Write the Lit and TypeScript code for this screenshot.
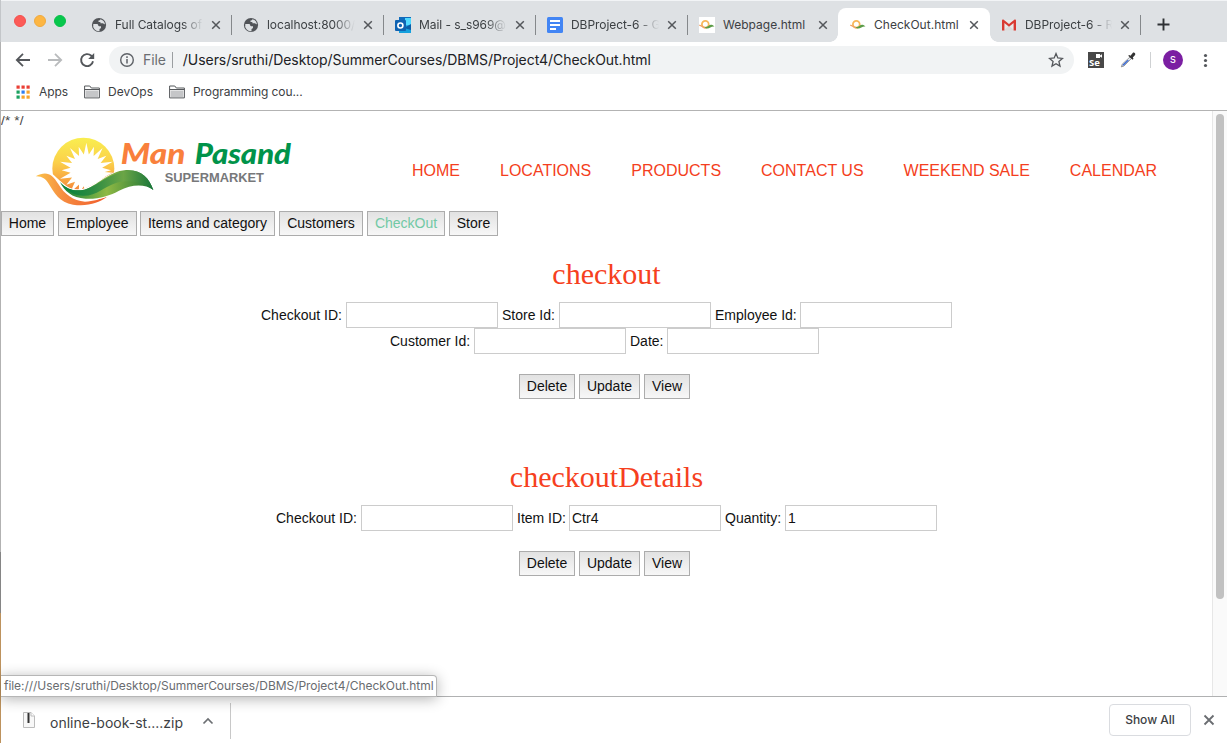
import { LitElement, html, css, svg } from "lit";
import { customElement, property } from "lit/decorators.js";
import { classMap } from "lit/directives/class-map.js";
import { styleMap } from "lit/directives/style-map.js";

const leafIcon = svg`
  <circle cx="6.300" cy="7.300" r="3.400" fill="none" stroke="#f8b75a" stroke-width="1.800"/>
  <path d="M.2 8.400C2.600 7.800 3 11 7.600 11.100" fill="none" stroke="#f0a368" stroke-width="1.200"/>
  <path d="M5.200 9.700C8.600 10.900 9.800 7.200 12.600 7.700c1.200.2 2.200.9 2.900 1.900C12.800 8.900 10.500 11.600 7.900 11.400 6.800 11.300 5.700 10.500 5.200 9.700Z" fill="#5b9c46"/>`;

const globeIcon = svg`
  <circle cx="8" cy="8" r="7.100" fill="#515458"/>
  <path d="M2.300 6.900h3.500c.9 0 1.400.6 1.400 1.300 0 .8.800 1 1.600 1h1.200v1.300c0 .9-.9 1-1.500 1.400v2.400A5.900 5.900 0 0 1 2.300 6.900Z" fill="#dee1e4"/>
  <path d="M9.300 2.200c-.1 1-1 1.300-1.800 1.300v1.400h1.900v1.400h2.300c.9 0 1.200.9 1.900.9h.4A6 6 0 0 0 9.300 2.200Z" fill="#dee1e4"/>`;

const icons: Record<string, unknown> = {
  globe: globeIcon,
  outlook: svg`
    <rect x="4" y="0" width="12" height="16" fill="#28a8ea"/>
    <path d="M4 0h12v4H4z" fill="#0f6cbd"/><path d="M10 1h6v7h-6z" fill="#50d9ff"/>
    <path d="M4 9h12v7H4z" fill="#14a0dd"/><path d="m9 11 7-4v6z" fill="#0a5ea8"/>
    <rect x="0" y="3" width="11" height="11" rx="1" fill="#0f63b2"/>
    <circle cx="5.400" cy="8.500" r="2.500" fill="none" stroke="#fff" stroke-width="1.600"/>`,
  docs: svg`
    <rect width="16" height="16" rx="1.500" fill="#4285f4"/>
    <path d="M3 4h10M3 8h10M3 12h6" stroke="#fff" stroke-width="1.800"/>`,
  leafBox: svg`<rect width="16" height="16" fill="#fff"/>${leafIcon}`,
  leaf: leafIcon,
  gmail: svg`
    <path d="M2.500 3h11v10.500h-11z" fill="#e8e8e8"/>
    <path d="M2.500 13.500 8 9l5.500 4.500z" fill="#dadada"/>
    <path d="M1 3.600C1 2.600 2 2.200 2.700 2.800L8 7l5.300-4.200c.7-.6 1.700-.2 1.700.8v9.900h-2.400V6L8 9.700 3.400 6v7.500H1z" fill="#d93a32"/>`,
};

interface TabInfo { title: string; icon: string; width: number; fade?: boolean; active?: boolean; }

const tabs: TabInfo[] = [
  { title: "Full Catalogs of", icon: "globe", width: 152, fade: true },
  { title: "localhost:8000/", icon: "globe", width: 152, fade: true },
  { title: "Mail - s_s969@", icon: "outlook", width: 152, fade: true },
  { title: "DBProject-6 - G", icon: "docs", width: 152, fade: true },
  { title: "Webpage.html", icon: "leafBox", width: 151 },
  { title: "CheckOut.html", icon: "leaf", width: 151, active: true },
  { title: "DBProject-6 - R", icon: "gmail", width: 151, fade: true },
];

@customElement("browser-tab")
class BrowserTab extends LitElement {
  @property({ attribute: false }) tab!: TabInfo;
  @property({ type: Boolean }) separated = false;
  static styles = css`
    :host { display: block; }
    .tab { display: flex; align-items: center; box-sizing: border-box; height: 34px; padding: 0 9px 0 12px; position: relative; }
    .sep::before { content: ""; position: absolute; left: 0; top: 7px; width: 1px; height: 20px; background: #85888b; }
    .active { background: #fff; border-radius: 8px 8px 0 0; margin-right: -1px; padding-right: 10px; }
    .active::before, .active::after { content: ""; position: absolute; bottom: 0; width: 8px; height: 8px; }
    .active::before { left: -8px; background: radial-gradient(circle at 0 0, transparent 7.500px, #fff 8px); }
    .active::after { right: -8px; background: radial-gradient(circle at 100% 0, transparent 7.500px, #fff 8px); }
    .icon { flex: none; width: 16px; height: 16px; }
    .title { flex: 1; min-width: 0; margin-left: 8px; white-space: nowrap; font: 12px/18px Inter, sans-serif; letter-spacing: .02px; color: #3c4043; }
    .fade { margin-right: -4px; letter-spacing: -.06px; -webkit-mask-image: linear-gradient(90deg, #000 76%, transparent 100%); mask-image: linear-gradient(90deg, #000 76%, transparent 100%); }
    .close { flex: none; width: 12px; height: 12px; margin-left: 7px; }
    .fade + .close { margin-left: 11px; }
  `;
  render() {
    const t = this.tab;
    return html`<div class=${classMap({ tab: true, active: !!t.active, sep: this.separated })}>
      <svg class="icon" viewBox="0 0 16 16">${icons[t.icon]}</svg>
      <span class=${classMap({ title: true, fade: !!t.fade })}>${t.title}</span>
      <svg class="close" viewBox="0 0 12 12"><path d="m2.200 2.200 7.600 7.600m0-7.600-7.600 7.600" stroke="#54575b" stroke-width="1.500" fill="none"/></svg>
    </div>`;
  }
}

@customElement("browser-chrome")
class BrowserChrome extends LitElement {
  static styles = css`
    :host { display: block; font-family: Inter, sans-serif; }
    svg { display: block; flex: none; }
    .strip { display: flex; height: 42px; box-sizing: border-box; padding-top: 8px; background: #dee1e4; box-shadow: inset 0 1px #f2f4f6; }
    .lights { display: flex; gap: 8px; width: 78px; box-sizing: border-box; padding: 7px 0 0 13px; }
    .light { width: 12px; height: 12px; border-radius: 50%; box-sizing: border-box; }
    .red { background: #fc5b57; border: 1px solid #f4504d; }
    .amber { background: #fdb643; border: 1px solid #f0aa3e; }
    .green { background: #07c74c; border: 1px solid #0abf4b; }
    .plus { margin: 10px 0 0 16px; }
    .endsep { width: 1px; height: 20px; margin-top: 7px; background: #85888b; }
    .bar { display: flex; align-items: center; height: 36px; }
    .back { margin-left: 14px; } .fwd { margin-left: 16px; } .reload { margin-left: 16px; }
    .omni { display: flex; align-items: center; box-sizing: border-box; width: 965px; height: 28px; margin-left: 14px; border-radius: 14px; background: #f1f3f4; padding: 0 10px; font-size: 14px; line-height: 17px; }
    .file { margin: -1px 0 0 8px; color: #6a6d71; letter-spacing: -.1px; }
    .vline { width: 1px; height: 16px; margin: 0 10px 0 6px; background: #9b9ea1; }
    .url { flex: 1; margin-top: -1px; color: #202124; letter-spacing: -.045px; white-space: nowrap; }
    .se { display: flex; align-items: flex-end; width: 16px; height: 16px; margin-left: 14px; background: #484848; color: #fff; position: relative; font: bold 9.500px/10px "Open Sans", sans-serif; padding-left: 1px; box-sizing: border-box; }
    .cam { position: absolute; right: 2px; top: 2px; }
    .drop { margin-left: 16px; }
    .thin { width: 1px; height: 16px; margin-left: 14px; background: #cfd1d3; }
    .avatar { width: 20px; height: 20px; margin-left: 12px; border-radius: 50%; background: #7b1fa2; color: #fff; text-align: center; font: 500 9px/20px Inter, sans-serif; }
    .dots { margin-left: 14px; }
    .marks { display: flex; align-items: center; height: 33px; padding: 0 0 5px 15px; font-size: 12px; line-height: 15px; color: #3c4043; border-bottom: 1px solid #b3b3b3; box-sizing: border-box; }
    .apps { margin-right: 9px; } .apptext { width: 45px; letter-spacing: -.1px; } .folder { margin-right: 8px; } .dev { width: 61px; letter-spacing: 0; } .prog { letter-spacing: -.08px; }
  `;
  private folder() {
    return html`<svg class="folder" width="16" height="14" viewBox="0 0 16 14"><path d="M.6 12.900V1h5.200l1.500 2h8.100v9.900z" fill="#fff" stroke="#55585b"/><path d="M1.600 5.500h12.800v6.500H1.600z" fill="#c5c6c8"/><path d="M.6 4.500h14.800" stroke="#55585b"/></svg>`;
  }
  render() {
    const dots = [["#ea3f35", "#ea3f35", "#ea3f35"], ["#1ba260", "#2f7ef0", "#f7a32c"], ["#1ba260", "#f7a32c", "#f7a32c"]];
    return html`
      <div class="strip">
        <div class="lights"><i class="light red"></i><i class="light amber"></i><i class="light green"></i></div>
        ${tabs.map((t, i) => html`<browser-tab style=${styleMap({ width: t.width + "px" })} .tab=${t} .separated=${i > 0 && i < 5}></browser-tab>`)}
        <div class="endsep"></div>
        <svg class="plus" width="13" height="13" viewBox="0 0 13 13"><path d="M6.500.5v12M.5 6.500h12" stroke="#2e3134" stroke-width="1.900"/></svg>
      </div>
      <div class="bar">
        <svg class="back" width="16" height="16" viewBox="0 0 16 16"><path d="M15 8H2.500M8 1.800 1.800 8 8 14.200" fill="none" stroke="#54575b" stroke-width="1.800"/></svg>
        <svg class="fwd" width="16" height="16" viewBox="0 0 16 16"><path d="M1 8h12.500M8 1.800 14.200 8 8 14.200" fill="none" stroke="#b9bbbd" stroke-width="1.800"/></svg>
        <svg class="reload" width="16" height="16" viewBox="0 0 16 16"><path d="M14 9.200A6 6 0 1 1 12.300 3.800L13.500 5" fill="none" stroke="#54575b" stroke-width="1.900"/><path d="M15.200 1v6H9.200z" fill="#54575b"/></svg>
        <div class="omni">
          <svg width="16" height="16" viewBox="0 0 16 16"><circle cx="8" cy="8" r="6.300" fill="none" stroke="#5f6368" stroke-width="1.400"/><path d="M8 7v4.500M8 4.300v1.600" stroke="#5f6368" stroke-width="1.500"/></svg>
          <span class="file">File</span><i class="vline"></i>
          <span class="url">/Users/sruthi/Desktop/SummerCourses/DBMS/Project4/CheckOut.html</span>
          <svg width="16" height="16" viewBox="0 0 16 16"><path d="m8 1.600 1.800 4.400 4.700.4-3.600 3.100 1.100 4.600L8 11.700l-4 2.400 1.100-4.600L1.500 6.400 6.200 6z" fill="none" stroke="#54575b" stroke-width="1.300"/></svg>
        </div>
        <div class="se">Se<svg class="cam" width="6" height="4" viewBox="0 0 6 4"><path d="M0 0h4v1.500L6 .3v3.400L4 2.600V4H0z" fill="#fff"/></svg></div>
        <svg class="drop" width="16" height="16" viewBox="0 0 16 16"><path d="M10 5 2.200 12.200 1.300 14.900 4 14 11.400 6.500z" fill="#e2e7ef" stroke="#777" stroke-width=".7"/><path d="M7.500 8 3 12.300 2.300 13.800 4 13.200 9 8.300z" fill="#3567d6"/><path d="m8.200 3.800 1-.9 1.300.8L12.700 1c1-1 3.300 0 2.400 2.100l-2.300 2.400.7 1.300-1 .9z" fill="#333"/></svg>
        <i class="thin"></i><div class="avatar">S</div>
        <svg class="dots" width="16" height="16" viewBox="0 0 16 16" fill="#54575b"><circle cx="8.500" cy="3.500" r="1.600"/><circle cx="8.500" cy="8.500" r="1.600"/><circle cx="8.500" cy="13.500" r="1.600"/></svg>
      </div>
      <div class="marks">
        <svg class="apps" width="14" height="14" viewBox="0 0 14 14">${dots.map((r, y) => r.map((c, x) => svg`<rect x=${x * 5 + .5} y=${y * 5 + .5} width="3.200" height="3.200" fill=${c}/>`))}</svg>
        <span class="apptext">Apps</span>
        ${this.folder()}<span class="dev">DevOps</span>
        ${this.folder()}<span class="prog">Programming cou...</span>
      </div>`;
  }
}

interface Field { label: string; labelWidth: number; value?: string; }

@customElement("checkout-page")
class CheckoutPage extends LitElement {
  static styles = css`
    :host { display: block; font-family: "Liberation Sans", Arial, sans-serif; color: #111; }
    .comment { height: 20px; font-size: 13.500px; line-height: 20px; color: #444; letter-spacing: .2px; }
    .header { display: flex; height: 80px; }
    .logo { display: block; margin: 4px 0 0 34px; flex: none; }
    .script { font-family: Lato, sans-serif; font-weight: 900; font-style: italic; font-size: 88px; }
    .market { font-family: "Liberation Sans", sans-serif; font-weight: bold; font-size: 38px; fill: #77787a; }
    .nav { display: flex; gap: 40px; margin-left: 117px; padding-top: 31px; font-size: 16px; line-height: 18px; color: #f43e20; white-space: nowrap; }
    .menu { display: flex; }
    .btn { display: flex; justify-content: center; align-items: flex-start; box-sizing: border-box; height: 25px; padding: 3px 0 0; border: 1px solid #acacac; background: linear-gradient(#e2e2e2, #f7f7f7); font: 14px/17px "Liberation Sans", Arial, sans-serif; color: #111; white-space: nowrap; margin-right: 4px; }
    .current { color: #72c9a5; }
    .tight { margin-right: 3px; }
    .heading { margin: 0; text-align: center; font: 30px/34px "Liberation Serif", serif; color: #f63f20; }
    .first { padding: 21px 0 1px; }
    .second { padding: 61px 0 1px; }
    .fields { display: flex; justify-content: center; height: 26px; font-size: 14px; line-height: 26px; }
    .top { margin-top: 10px; }
    .field { display: flex; white-space: nowrap; margin-right: 4px; }
    .last { margin-right: 0; }
    .input { box-sizing: border-box; width: 152px; height: 26px; margin: 0; padding: 0 2px; border: 1px solid #ccc; background: #fff; font: 14px "Liberation Sans", Arial, sans-serif; color: #111; outline: 0; }
    .actions { display: flex; justify-content: center; margin-top: 20px; }
  `;
  private row(fields: Field[], cls: Record<string, boolean> = {}, trailing = false) {
    return html`<div class=${classMap({ fields: true, ...cls })}>${fields.map((f, i) => html`
      <label class=${classMap({ field: true, last: !trailing && i === fields.length - 1 })}><span style=${styleMap({ width: f.labelWidth + "px" })}>${f.label}</span><input class="input" .value=${f.value ?? ""}></label>`)}</div>`;
  }
  private actions() {
    return html`<div class="actions">${[["Delete", 56], ["Update", 61], ["View", 46]].map(([t, w]) => html`<button class="btn" style=${styleMap({ width: w + "px" })}>${t}</button>`)}</div>`;
  }
  render() {
    const menu: [string, number][] = [["Home", 53], ["Employee", 79], ["Items and category", 135], ["Customers", 84], ["CheckOut", 78], ["Store", 49]];
    const rays = Array.from({ length: 40 }, (_, i) => {
      const a = (i * Math.PI) / 20 - Math.PI / 2;
      const r = i % 2 ? 48 : (i % 4 ? 74 : 83);
      return `${(164 + r * Math.cos(a)).toFixed(1)},${(115 + r * Math.sin(a)).toFixed(1)}`;
    }).join(" ");
    return html`
      <div class="comment">/* */</div>
      <div class="header">
        <svg class="logo" width="260" height="74" viewBox="105 90 780 222">
          <defs>
            <linearGradient id="sun" x1="0" y1="0" x2="0" y2="1"><stop offset="0" stop-color="#f9ee50"/><stop offset=".4" stop-color="#fbd04a"/><stop offset=".75" stop-color="#f79a3e"/><stop offset="1" stop-color="#ec6137"/></linearGradient>
            <linearGradient id="swoosh"><stop offset="0" stop-color="#fbc34a"/><stop offset=".4" stop-color="#f58a40"/><stop offset="1" stop-color="#f15a2b"/></linearGradient>
            <linearGradient id="leaf"><stop offset="0" stop-color="#00803c"/><stop offset=".35" stop-color="#2c8b42"/><stop offset=".68" stop-color="#6ba546"/><stop offset="1" stop-color="#17753a"/></linearGradient>
            <linearGradient id="under"><stop offset="0" stop-color="#0f7d3b"/><stop offset=".5" stop-color="#8fb944"/><stop offset="1" stop-color="#1d7537"/></linearGradient>
            <clipPath id="disc"><path d="M0 0H384V118C300 112 255 118 210 142 180 160 160 172 138 173 110 173 92 152 80 142 72 134 66 127 56 122Z"/></clipPath>
          </defs>
          <g transform="translate(95 81)">
            <g clip-path="url(#disc)">
              <circle cx="155" cy="110" r="93" fill="url(#sun)"/>
              <polygon points=${rays} fill="#fff"/>
              <path d="M164 115 250 123 252 180 158 178Z" fill="#fff"/>
              <path d="M208 145C222 131 238 124 248 120L247 125C232 129 220 136 208 145Z" fill="#f58c3d"/>
            </g>
            <path d="M12 133C45 115 62 127 80 156 98 186 125 207 160 209 185 209 206 201 228 193 203 213 165 225 124 218 83 211 69 183 51 155 42 141 31 132 12 133Z" fill="url(#swoosh)"/>
            <path d="M85 150C107 175 130 178 158 173 195 163 230 118 283 114 330 112 352 138 365 174 338 154 300 157 262 176 235 191 200 202 162 200 120 198 98 176 85 150Z" fill="url(#under)" stroke="#fff" stroke-width="5" paint-order="stroke"/>
            <path d="M85 150C107 175 130 178 158 173 195 163 230 124 285 116 330 113 352 138 365 174 332 148 295 142 255 152 215 164 195 193 152 191 122 190 101 172 85 150Z" fill="url(#leaf)"/>
          </g>
          <text class="script" x="362" y="177" fill="#f9803c" textLength="194" lengthAdjust="spacingAndGlyphs">Man</text>
          <text class="script" x="584" y="177" fill="#00934a" textLength="289" lengthAdjust="spacingAndGlyphs">Pasand</text>
          <text class="market" x="494" y="231" textLength="298" lengthAdjust="spacingAndGlyphs">SUPERMARKET</text>
        </svg>
        <nav class="nav">${["HOME", "LOCATIONS", "PRODUCTS", "CONTACT US", "WEEKEND SALE", "CALENDAR"].map((t) => html`<span>${t}</span>`)}</nav>
      </div>
      <div class="menu">${menu.map(([t, w], i) => html`<button class=${classMap({ btn: true, current: t === "CheckOut", tight: i === 1 })} style=${styleMap({ width: w + "px" })}>${t}</button>`)}</div>
      <h2 class="heading first">checkout</h2>
      ${this.row([{ label: "Checkout ID:", labelWidth: 85 }, { label: "Store Id:", labelWidth: 57 }, { label: "Employee Id:", labelWidth: 85 }], { top: true })}
      ${this.row([{ label: "Customer Id:", labelWidth: 84 }, { label: "Date:", labelWidth: 37 }], {}, true)}
      ${this.actions()}
      <h2 class="heading second">checkoutDetails</h2>
      ${this.row([{ label: "Checkout ID:", labelWidth: 85 }, { label: "Item ID:", labelWidth: 52, value: "Ctr4" }, { label: "Quantity:", labelWidth: 60, value: "1" }], { top: true })}
      ${this.actions()}`;
  }
}

@customElement("app-root")
class AppRoot extends LitElement {
  static styles = css`
    :host { display: block; width: 1227px; height: 743px; overflow: hidden; font-family: Inter, sans-serif; background: #fff; }
    .window { position: relative; display: grid; grid-template: 111px 585px 47px / 1px 1211px 15px; height: 743px; }
    .edge { grid-column: 1; grid-row: 1 / 4; background: linear-gradient(#c3c6c9 0 42px, #b2b2b2 42px 552px, #858585 552px 613px, #bd925d 613px); }
    .chrome { grid-column: 2 / 4; grid-row: 1; }
    .page { grid-column: 2; grid-row: 2; overflow: hidden; }
    .track { grid-column: 3; grid-row: 2; padding: 3px 0 0 3px; background: #fafafa; border-left: 1px solid #e7e7e7; }
    .thumb { width: 8px; height: 485px; border-radius: 4px; background: #c1c1c1; }
    .shelf { grid-column: 2 / 4; grid-row: 3; display: flex; align-items: center; border-top: 1px solid #b0b1b2; color: #3c4043; }
    .doc { margin: 0 0 1px 22px; }
    .name { width: 133px; margin: 4px 0 0 15px; font-size: 14px; white-space: nowrap; }
    .chev { margin: 1px 0 0 19px; }
    .div { width: 1px; height: 36px; margin-left: 16px; margin-top: 2px; background: #c8c8c8; }
    .all { box-sizing: border-box; width: 82px; height: 32px; margin-left: auto; border: 1px solid #dadce0; border-radius: 4px; text-align: center; font: 500 12px/29px Inter, sans-serif; }
    .x { margin: 0 12px 0 12px; }
    .status { position: absolute; left: 1px; top: 675px; box-sizing: border-box; width: 436px; height: 22px; padding-left: 3px; background: #fff; border: 1px solid #b6b6b6; border-left: 0; border-radius: 0 4px 0 0; box-shadow: 0 2px 14px rgba(0, 0, 0, .3); font-size: 12px; line-height: 20px; color: #696c70; white-space: nowrap; }
    .statustext { letter-spacing: -.05px; }
  `;
  render() {
    return html`<div class="window">
      <div class="edge"></div>
      <browser-chrome class="chrome"></browser-chrome>
      <checkout-page class="page"></checkout-page>
      <div class="track"><div class="thumb"></div></div>
      <div class="shelf">
        <svg class="doc" width="12" height="16" viewBox="0 0 12 16"><path d="M.5.5h7.500l3.500 3.500v11.500H.5z" fill="#f8f8f8" stroke="#bcbcbc"/><path d="M8 .5V4h3.500" fill="#fff" stroke="#bcbcbc"/><path d="M5.500 1v10" stroke="#333" stroke-width="2"/></svg>
        <span class="name">online-book-st....zip</span>
        <svg class="chev" width="12" height="8" viewBox="0 0 12 8"><path d="m1.500 6.500 4.500-4.500 4.500 4.500" fill="none" stroke="#6c6f73" stroke-width="1.700"/></svg>
        <i class="div"></i>
        <div class="all">Show All</div>
        <svg class="x" width="12" height="12" viewBox="0 0 12 12"><path d="m1.500 1.500 9 9m0-9-9 9" stroke="#6a6d71" stroke-width="1.800"/></svg>
      </div>
      <div class="status"><span class="statustext">file:///Users/sruthi/Desktop/SummerCourses/DBMS/Project4/CheckOut.html</span></div>
    </div>`;
  }
}
